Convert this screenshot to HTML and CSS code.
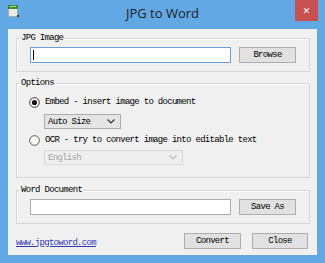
FILE: index.html
```html
<!DOCTYPE html>
<html lang="en">
<head>
  <meta charset="UTF-8">
  <title>JPG to Word</title>
  <link rel="stylesheet" href="styles.css">
</head>
<body>
  <div class="window">
    <!-- Заголовок окна -->
    <div class="titlebar">
      <svg class="app-icon" width="11" height="12" viewBox="0 0 11 12">
        <rect x="0.5" y="1.5" width="9" height="10" fill="#e9ebe6" stroke="#a9ada4"/>
        <rect x="0" y="0" width="10" height="4" fill="#3f8a3a"/>
        <rect x="2" y="1" width="6" height="1" fill="#b7e07a"/>
        <rect x="9" y="10" width="2" height="2" fill="#333"/>
      </svg>
      <div class="title">JPG to Word</div>
      <div class="close-btn">&#x2715;</div>
    </div>

    <div class="client">
      <!-- JPG Image -->
      <fieldset class="group">
        <legend>JPG Image</legend>
        <div class="group-row">
          <div class="textbox focused"><span class="caret"></span></div>
          <div class="btn">Browse</div>
        </div>
      </fieldset>

      <!-- Options -->
      <fieldset class="group group-options">
        <legend>Options</legend>
        <div class="options">
          <div class="radio-row">
            <svg class="radio" width="11" height="11" viewBox="0 0 11 11">
              <circle cx="5.5" cy="5.5" r="4.8" fill="#fff" stroke="#333"/>
              <circle cx="5.5" cy="5.5" r="2.6" fill="#111"/>
            </svg>
            <span>Embed - insert image to document</span>
          </div>
          <div class="combo combo-size">
            <span>Auto Size</span>
            <svg width="8" height="5" viewBox="0 0 8 5"><path d="M0.5 0.5 L4 4 L7.5 0.5" fill="none" stroke="#333" stroke-width="1.2"/></svg>
          </div>
          <div class="radio-row">
            <svg class="radio" width="11" height="11" viewBox="0 0 11 11">
              <circle cx="5.5" cy="5.5" r="4.8" fill="#fff" stroke="#555"/>
            </svg>
            <span>OCR - try to convert image into editable text</span>
          </div>
          <div class="combo combo-lang disabled">
            <span>English</span>
            <svg width="8" height="5" viewBox="0 0 8 5"><path d="M0.5 0.5 L4 4 L7.5 0.5" fill="none" stroke="#b8b8b8" stroke-width="1.2"/></svg>
          </div>
        </div>
      </fieldset>

      <!-- Word Document -->
      <fieldset class="group">
        <legend>Word Document</legend>
        <div class="group-row">
          <div class="textbox"></div>
          <div class="btn">Save As</div>
        </div>
      </fieldset>

      <!-- Нижняя строка -->
      <div class="bottom-row">
        <a class="site-link" href="#">www.jpgtoword.com</a>
        <div class="bottom-buttons">
          <div class="btn">Convert</div>
          <div class="btn btn-close">Close</div>
        </div>
      </div>
    </div>
  </div>
</body>
</html>
```

FILE: styles.css
```css
/* Окно на весь экран */
body {
  margin: 0;
  padding: 0;
  font-family: "Liberation Mono", monospace;
  font-size: 9px;
  letter-spacing: -0.7px;
  color: #000;
}

.window {
  width: 325px;
  height: 263px;
  background: #62a8e5;
  display: flex;
  flex-direction: column;
  box-sizing: border-box;
}

/* Заголовок */
.titlebar {
  height: 29px;
  display: grid;
  grid-template-columns: 1fr auto 1fr;
  align-items: start;
}

.app-icon {
  margin: 5px 0 0 8px;
}

.title {
  font-family: "Open Sans", sans-serif;
  font-size: 13px;
  letter-spacing: 0;
  color: #1e1e1e;
  line-height: 18px;
  padding-top: 4px;
}

.close-btn {
  justify-self: end;
  width: 23px;
  height: 21px;
  margin-right: 7px;
  background: #c75050;
  color: #fff;
  font-family: "DejaVu Sans", sans-serif;
  font-size: 9px;
  font-weight: bold;
  letter-spacing: 0;
  display: flex;
  align-items: center;
  justify-content: center;
}

/* Рабочая область */
.client {
  flex: 1;
  margin: 0 8px 8px 8px;
  background: #f0f0f0;
  padding: 4px 7px 0 8px;
}

.group {
  margin: 0 0 6px 0;
  padding: 0;
  border: 1px solid #d5d5d5;
  box-shadow: inset 1px 1px 0 #fff;
}

.group legend {
  margin-left: 3px;
  padding: 0 1px;
  line-height: 10px;
}

.group-row {
  display: flex;
  gap: 8px;
  padding: 4px 13px 8px 13px;
}

.textbox {
  flex: 1;
  height: 16px;
  box-sizing: border-box;
  background: #fff;
  border: 1px solid #abadb3;
  position: relative;
}

.textbox.focused {
  border-color: #6e9fd2;
}

.caret {
  position: absolute;
  left: 2px;
  top: 2px;
  width: 1px;
  height: 10px;
  background: #000;
}

.btn {
  width: 57px;
  height: 16px;
  box-sizing: border-box;
  background: #e1e1e1;
  border: 1px solid #adadad;
  display: flex;
  align-items: center;
  justify-content: center;
  line-height: 10px;
}

/* Опции */
.group-options {
  margin-bottom: 7px;
}

.options {
  display: flex;
  flex-direction: column;
  align-items: flex-start;
  padding: 8px 0 12px 12px;
}

.radio-row {
  display: flex;
  align-items: center;
  gap: 5px;
  height: 12px;
  line-height: 10px;
}

.combo {
  margin-left: 15px;
  height: 15px;
  box-sizing: border-box;
  display: flex;
  align-items: center;
  justify-content: space-between;
  padding: 0 5px 0 3px;
  line-height: 10px;
}

.combo-size {
  width: 77px;
  background: #e5e5e5;
  border: 1px solid #acacac;
  margin-top: 6px;
  margin-bottom: 5px;
}

.combo-lang {
  width: 139px;
  margin-top: 4px;
}

.combo.disabled {
  background: #efefef;
  border: 1px solid #d9d9d9;
  color: #a3a3a3;
}

/* Нижняя строка */
.bottom-row {
  display: flex;
  justify-content: space-between;
  align-items: center;
  margin-top: 9px;
  padding-right: 2px;
}

.site-link {
  color: #2f36b0;
  text-decoration: underline;
  line-height: 10px;
  margin-top: 3px;
}

.bottom-buttons {
  display: flex;
  gap: 11px;
}

.btn-close {
  width: 56px;
}
```
